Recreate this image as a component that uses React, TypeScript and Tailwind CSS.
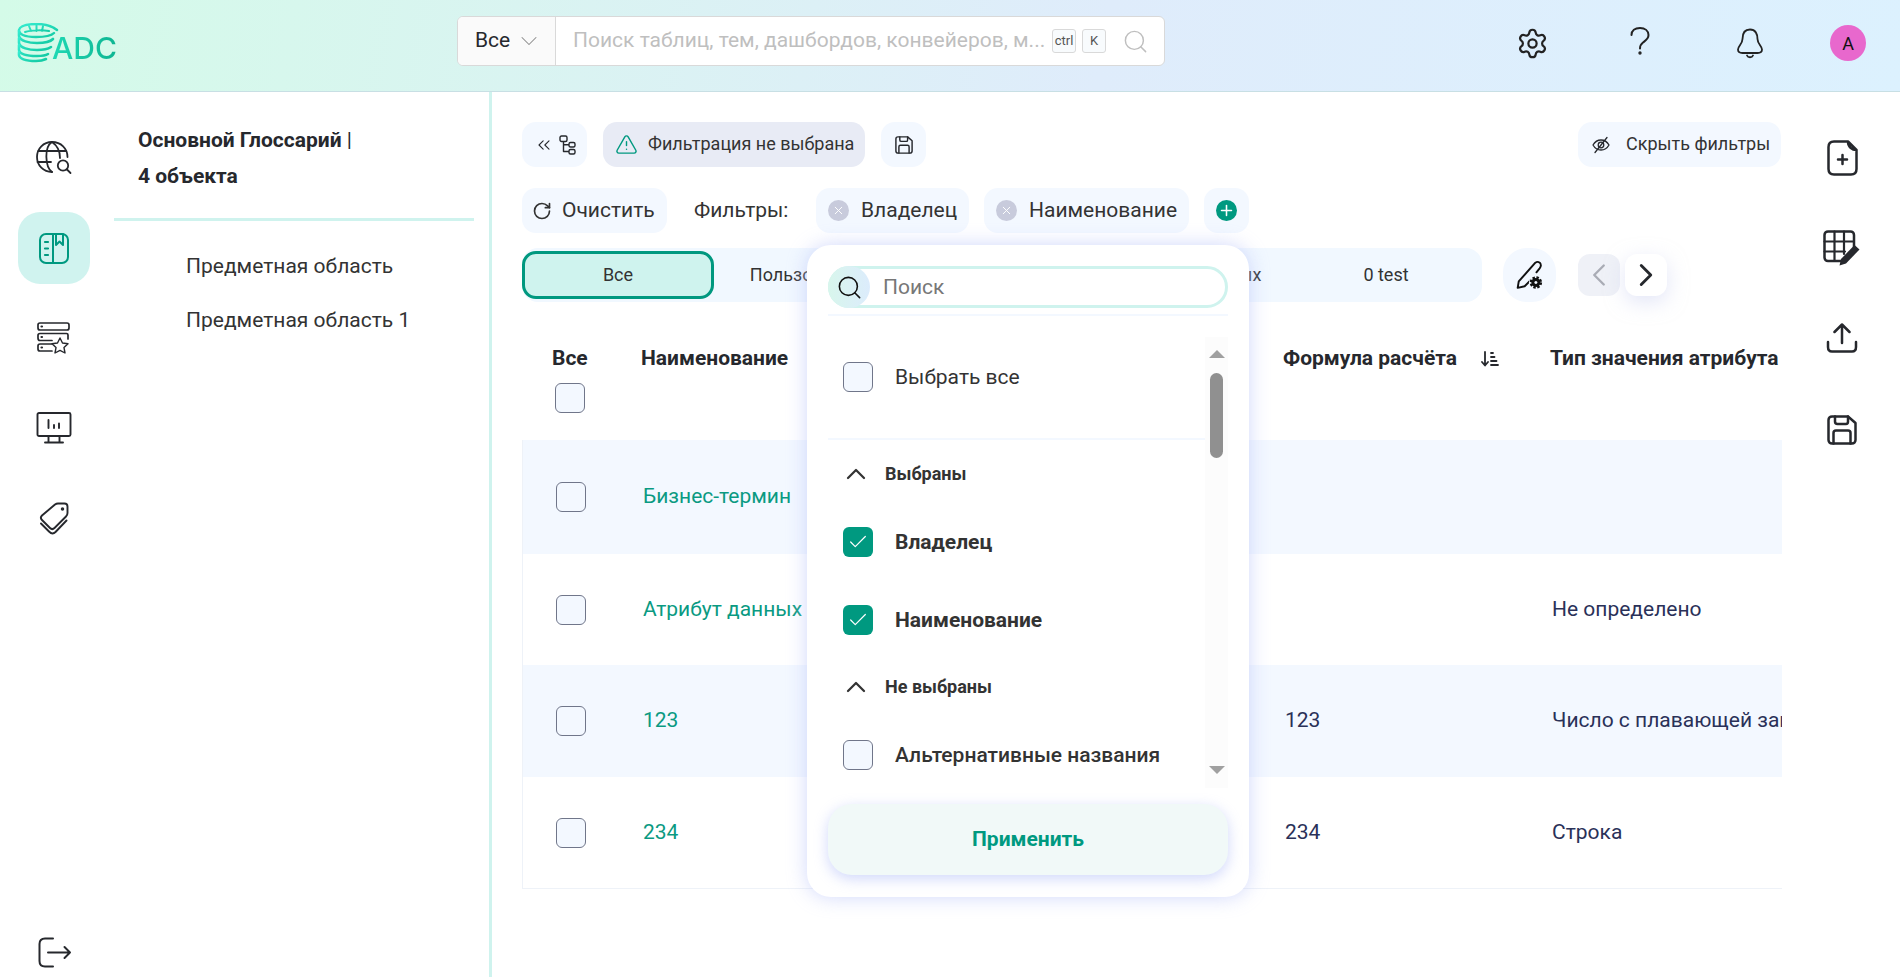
import React from 'react';
import { Settings, RotateCw, X, Plus, ChevronUp, ChevronLeft, ChevronRight, ChevronDown, Search, Check, ChevronsLeft, TriangleAlert } from 'lucide-react';

const Logo = () => (
  <div className="flex items-end">
    <svg width="44" height="40" viewBox="0 0 44 40" fill="none" className="shrink-0">
      <defs>
        <linearGradient id="lg" x1="0" y1="0" x2="1" y2="1">
          <stop offset="0" stopColor="#35ecd0" />
          <stop offset="1" stopColor="#12c9a2" />
        </linearGradient>
      </defs>
      <g stroke="url(#lg)" fill="none" strokeLinecap="round">
        <path d="M40 7C34 2 27 1 20 1C12 1 3 2 2 7C1.500 11 7 14 19 14C28 14 34 13 37 10" strokeWidth="2.400" />
        <path d="M12 3L14 8M26 3L25 8M19.500 2V8M8 9C14 7 26 7 32 8" strokeWidth="2" />
        <path d="M2 8V13C3 18 12 20 20 20C27 20 33 19 36 16" strokeWidth="2.600" />
        <path d="M2 15V20C3 25 12 27 20 27C26 27 31 26 34 24" strokeWidth="2.600" />
        <path d="M2 22V27C3 32 12 33 20 33C24 33 28 33 31 31" strokeWidth="2.600" />
        <path d="M2 29V32C3 37 12 38 19 38C23 38 27 37 29 36" strokeWidth="2.600" />
      </g>
    </svg>
    <span className="-ml-[9px] bg-linear-to-r from-[#1fd9b4] to-[#0db592] bg-clip-text text-[30px] leading-[30px] font-medium text-transparent [font-family:Inter,sans-serif]">ADC</span>
  </div>
);

const HelpIcon = () => (
  <svg width="20" height="28" viewBox="0 0 20 28" fill="none" stroke="#222" strokeWidth="2" strokeLinecap="round">
    <path d="M1.500 8C1.500 3.500 5 1 10 1C15 1 18.500 3.800 18.500 8C18.500 12 15.500 13.500 13 15.500C11 17 10 18.500 10 21.500" />
    <circle cx="10" cy="26" r="0.700" fill="#222" />
  </svg>
);

const BellIcon = () => (
  <svg width="28" height="31" viewBox="0 0 28 31" fill="none" stroke="#222" strokeWidth="1.800" strokeLinecap="round" strokeLinejoin="round">
    <path d="M14 1.500C8.500 1.500 6.500 6 6.500 11C6.500 16 2 18 2 21.500C2 24 4 25 6.500 25H21.500C24 25 26 24 26 21.500C26 18 21.500 16 21.500 11C21.500 6 19.500 1.500 14 1.500Z" />
    <path d="M11 27.500C12 29.800 16 29.800 17 27.500" />
  </svg>
);

const GlobeIcon = () => (
  <svg width="36" height="34" viewBox="0 0 36 34" fill="none" stroke="#26282d" strokeWidth="1.800" strokeLinecap="round">
    <path d="M31.500 16C31.500 7.500 25 1 16 1C7.500 1 1 7.500 1 16C1 24.500 7.500 31 16 31" />
    <path d="M16 31C9 26 8 6 16 1C22 5 24 11 24 17" />
    <path d="M2.500 10H30M1.500 21H15" />
    <circle cx="27" cy="24.500" r="5.200" />
    <path d="M31 28.500L34.500 32" />
  </svg>
);

const BookIcon = () => (
  <svg width="30" height="31" viewBox="0 0 30 31" fill="none" stroke="#009980" strokeWidth="2" strokeLinecap="round" strokeLinejoin="round">
    <rect x="1" y="1" width="28" height="29" rx="6" />
    <path d="M14 1V30M17 1V12L20.500 8.500L24 12V1" />
    <path d="M6 9H9M6 15.500H9M6 22H9" strokeWidth="2.200" />
  </svg>
);

const ServerStarIcon = () => (
  <svg width="34" height="32" viewBox="0 0 34 32" fill="none" stroke="#26282d" strokeWidth="1.700" strokeLinecap="round" strokeLinejoin="round">
    <rect x="1" y="1" width="31" height="7" rx="2" />
    <path d="M31 17V13C31 12 30.500 11.500 29.500 11.500H3C1.800 11.500 1 12.300 1 13.500V16C1 17.500 1.800 18.500 3 18.500H15" />
    <path d="M15 22H3C1.800 22 1 22.800 1 24V27C1 28.200 1.800 29 3 29H15" />
    <path d="M4.500 4.500H5M4.500 15H5M4.500 25.500H5" strokeWidth="2.200" />
    <path d="M23 16L25.500 21L31 21.800L27 25.600L28 31L23 28.400L18 31L19 25.600L15 21.800L20.500 21Z" strokeWidth="1.400" />
  </svg>
);

const MonitorIcon = () => (
  <svg width="36" height="32" viewBox="0 0 36 32" fill="none" stroke="#26282d" strokeWidth="1.900" strokeLinecap="round" strokeLinejoin="round">
    <rect x="1.500" y="1" width="33" height="23" rx="1.500" />
    <path d="M12.500 24V30M23.500 24V30M9 30.500H27" />
    <path d="M12.500 8V16M18 13V16M23 11.500V16" />
  </svg>
);

const TagIcon = () => (
  <svg width="30" height="33" viewBox="0 0 30 33" fill="none" stroke="#26282d" strokeWidth="1.900" strokeLinecap="round" strokeLinejoin="round">
    <path d="M19 1.500H25.500C27.500 1.500 28.500 2.500 28.500 4.500V11C28.500 12.500 28 13.500 27 14.500L15.500 26C14 27.500 12.500 27.500 11 26L3 18C1.500 16.500 1.500 15 3 13.500L16 2.500C17 1.800 18 1.500 19 1.500Z" />
    <circle cx="23.500" cy="7" r="0.800" fill="#26282d" />
    <path d="M2 21.500L10 29.500C12.500 32 14.500 32 16.500 30L27.500 18.500" />
  </svg>
);

const LogoutIcon = () => (
  <svg width="34" height="31" viewBox="0 0 34 31" fill="none" stroke="#26282d" strokeWidth="2" strokeLinecap="round" strokeLinejoin="round">
    <path d="M15 1.500H7C3.500 1.500 1.500 3.500 1.500 7V24C1.500 27.500 3.500 29.500 7 29.500H15" />
    <path d="M10 15.500H32M26.500 10L32 15.500L26.500 21" />
  </svg>
);

const TreeIcon = () => (
  <svg width="17" height="20" viewBox="0 0 17 20" fill="none" stroke="#26282d" strokeWidth="1.400" strokeLinejoin="round">
    <rect x="1" y="1" width="7" height="5.500" rx="1.500" />
    <rect x="10" y="7.500" width="6" height="4.500" rx="1.500" />
    <rect x="10" y="14.500" width="6" height="4.500" rx="1.500" />
    <path d="M4.500 6.500V16.500H10M4.500 9.800H10" />
  </svg>
);

const SaveIcon = ({ size, width }: { size: number; width: number }) => (
  <svg width={size} height={size} viewBox="0 0 30 30" fill="none" stroke="#26282d" strokeWidth={width} strokeLinecap="round" strokeLinejoin="round">
    <path d="M5 1.500H21L28.500 8V25C28.500 27 27 28.500 25 28.500H5C3 28.500 1.500 27 1.500 25V5C1.500 3 3 1.500 5 1.500Z" />
    <path d="M8 1.500V6.500C8 8 9 9 10.500 9H19C20.500 9 21 8 21 6.500V1.500" />
    <path d="M6.500 28.500V18C6.500 16.500 7.500 15.500 9 15.500H21C22.500 15.500 23.500 16.500 23.500 18V28.500" />
  </svg>
);

const EyeSlashIcon = () => (
  <svg width="18" height="18" viewBox="0 0 18 18" fill="none" stroke="#26282d" strokeWidth="1.300" strokeLinecap="round" strokeLinejoin="round">
    <path d="M1 9C3 5.500 5.800 4 9 4C12.200 4 15 5.500 17 9C15 12.500 12.200 14 9 14C5.800 14 3 12.500 1 9Z" />
    <circle cx="9" cy="9" r="2.800" />
    <path d="M15 1.500L3 16.500" />
  </svg>
);

const PenGearIcon = () => (
  <svg width="28" height="30" viewBox="0 0 26 28" fill="none">
    <path d="M18 2.500L2.500 20L1.500 26L8 24.500L14.500 18M18 2.500C20 1 22.500 2 23 4C23.500 5.500 23 6.500 22 7.800L19 11.500" stroke="#111" strokeWidth="1.800" strokeLinecap="round" strokeLinejoin="round" />
    <circle cx="18.500" cy="21" r="6.500" fill="#f3f8ff" />
    <circle cx="18.500" cy="21" r="4.600" stroke="#111" strokeWidth="2.400" strokeDasharray="2.200 1.400" />
    <circle cx="18.500" cy="21" r="4.200" fill="#111" />
    <circle cx="18.500" cy="21" r="1.400" fill="#f3f8ff" />
  </svg>
);

const NewDocIcon = () => (
  <svg width="31" height="36" viewBox="0 0 31 36" fill="none" stroke="#26282d" strokeWidth="2.500" strokeLinecap="round" strokeLinejoin="round">
    <path d="M21 1.500H7C3.500 1.500 1.500 3.500 1.500 7V29C1.500 32.500 3.500 34.500 7 34.500H24C27.500 34.500 29.500 32.500 29.500 29V10C25 10 21 7 21 1.500ZM21 1.500L29.500 10" />
    <path d="M15.500 15V24M11 19.500H20" />
  </svg>
);

const TableEditIcon = () => (
  <svg width="38" height="36" viewBox="0 0 38 36" fill="none" strokeLinecap="round" strokeLinejoin="round">
    <path d="M20 31H5C3 31 1.500 29.500 1.500 27.500V5C1.500 3 3 1.500 5 1.500H27.500C29.500 1.500 31 3 31 5V17" stroke="#26282d" strokeWidth="2.500" />
    <path d="M1.500 11.500H31M1.500 21.500H22M11.500 1.500V31M21 1.500V24" stroke="#26282d" strokeWidth="2.200" />
    <path d="M31.500 15L36.500 19.500L23 33.500L16.500 35.500L18 29Z" fill="#26282d" />
  </svg>
);

const UploadIcon = () => (
  <svg width="32" height="30" viewBox="0 0 32 30" fill="none" stroke="#26282d" strokeWidth="2.500" strokeLinecap="round" strokeLinejoin="round">
    <path d="M16 20V2M8.500 9L16 1.500L23.500 9" />
    <path d="M2 19V24C2 27 3.500 28.500 6 28.500H26C28.500 28.500 30 27 30 24V19" />
  </svg>
);

const SortIcon = () => (
  <svg width="18" height="16" viewBox="0 0 18 16" fill="none" stroke="#26282d" strokeWidth="1.800" strokeLinecap="round" strokeLinejoin="round">
    <path d="M4 1V14M1 11L4 14.500L7 11" />
    <path d="M10 2H12M10 6H13.500M10 10H15.500M10 14H17" />
  </svg>
);

const Box = ({ checked }: { checked?: boolean }) =>
  checked ? (
    <span className="flex h-[30px] w-[30px] shrink-0 items-center justify-center rounded-[6px] bg-[#009980]">
      <Check size={22} strokeWidth={1.300} className="text-white" />
    </span>
  ) : (
    <span className="block h-[30px] w-[30px] shrink-0 rounded-[6px] border border-[#70768a] bg-[#f3f8ff]" />
  );

const FilterChip = ({ label, className }: { label: string; className: string }) => (
  <div className={`flex h-[45px] items-center rounded-[14px] bg-[#f3f8ff] pl-[12px] ${className}`}>
    <span className="flex h-[21px] w-[21px] items-center justify-center rounded-full bg-[#c8cbdc]">
      <X size={13} strokeWidth={1.800} className="text-white" />
    </span>
    <span className="ml-[12px] text-[21px] text-[#333]">{label}</span>
  </div>
);

const rows = [
  { name: 'Бизнес-термин', formula: '', type: '', blue: true, h: 'h-[114px]' },
  { name: 'Атрибут данных', formula: '', type: 'Не определено', blue: false, h: 'h-[111px]' },
  { name: '123', formula: '123', type: 'Число с плавающей запятой', blue: true, h: 'h-[112px]' },
  { name: '234', formula: '234', type: 'Строка', blue: false, h: 'h-[111px]' },
];

const tabs = ['Все', 'Пользователя', 'Системные', 'Корпоративных', '0 test'];

const App: React.FC = () => {
  return (
    <div className="relative flex h-[977px] w-full flex-col overflow-hidden bg-white text-[#26282d] [font-family:Roboto,sans-serif]">
      {/* Header */}
      <header className="flex h-[92px] shrink-0 items-start border-b border-[#c8dfe4] bg-linear-[100deg,#d4fbe8_0%,#dfecfb_58%,#dcf1fe_100%]">
        <div className="mt-[23px] ml-[17px] w-[440px]">
          <Logo />
        </div>
        <div className="mt-[16px] flex h-[50px] w-[708px] overflow-hidden rounded-[6px] border border-[#d9d9d9] bg-white">
          <div className="flex w-[98px] shrink-0 items-center border-r border-[#d9d9d9] bg-[#fafafa] pl-[17px] text-[21px] text-[#26282d]">
            Все
            <ChevronDown size={28} strokeWidth={0.900} className="ml-[5px] text-[#8c8c8c]" />
          </div>
          <div className="flex min-w-0 flex-1 items-center pl-[17px]">
            <span className="w-[470px] whitespace-nowrap text-[21px] text-[#bfbfbf]">Поиск таблиц, тем, дашбордов, конвейеров, м...</span>
            <span className="ml-[9px] flex h-[24px] w-[24px] items-center justify-center rounded-[3px] border border-[#d9d9d9] bg-[#f8fbfd] text-[13px] text-[#555]">ctrl</span>
            <span className="ml-[6px] flex h-[24px] w-[24px] items-center justify-center rounded-[3px] border border-[#d9d9d9] bg-[#f8fbfd] text-[13px] text-[#555]">K</span>
            <Search size={27} strokeWidth={1.300} className="ml-[16px] text-[#bfbfbf]" />
          </div>
        </div>
        <div className="mt-[25px] ml-[351px] flex items-center">
          <Settings size={33} strokeWidth={1.600} className="text-[#222]" />
          <span className="ml-[81px] -translate-y-[2px]"><HelpIcon /></span>
          <span className="ml-[86px]"><BellIcon /></span>
          <span className="ml-[66px] flex h-[36px] w-[36px] items-center justify-center rounded-full bg-[#e868cd] text-[18px] text-[#111]">A</span>
        </div>
      </header>

      <div className="flex min-h-0 flex-1">
        {/* Left rail */}
        <nav className="flex w-[108px] shrink-0 flex-col pt-[21px] pb-0">
          <div className="flex h-[90px] w-[108px] items-center justify-center pr-[1px]"><GlobeIcon /></div>
          <div className="flex h-[90px] w-[108px] items-center"><div className="ml-[18px] flex h-[72px] w-[72px] items-center justify-center rounded-[22px] bg-[#d0f3ef]"><BookIcon /></div></div>
          <div className="flex h-[90px] w-[108px] items-center justify-center"><ServerStarIcon /></div>
          <div className="flex h-[90px] w-[108px] items-center justify-center"><MonitorIcon /></div>
          <div className="flex h-[90px] w-[108px] items-center justify-center"><TagIcon /></div>
          <div className="mt-auto flex h-[50px] w-[108px] items-center justify-center pl-[2px]"><LogoutIcon /></div>
        </nav>

        {/* Glossary tree */}
        <aside className="w-[384px] shrink-0 border-r-[3px] border-[#cff3ee] pt-[30px]">
          <div className="pl-[30px] text-[21px] leading-[36px] font-bold text-[#26282d]">
            <div>Основной Глоссарий <span className="font-normal">|</span></div>
            <div>4 объекта</div>
          </div>
          <div className="mt-[24px] ml-[6px] h-[3px] w-[360px] bg-[#cff3ee]" />
          <ul className="mt-[18px] pl-[78px] text-[21px] leading-[54px] text-[#333]">
            <li>Предметная область</li>
            <li>Предметная область 1</li>
          </ul>
        </aside>

        {/* Content */}
        <main className="min-w-0 flex-1 pt-[30px] pl-[30px]">
          <div className="flex h-[45px] items-stretch">
            <button className="flex w-[65px] items-center justify-center gap-[5px] rounded-[14px] bg-[#f3f8ff]">
              <ChevronsLeft size={20} strokeWidth={1.300} />
              <TreeIcon />
            </button>
            <div className="ml-[16px] flex w-[262px] items-center rounded-[14px] bg-[#e8ebf5] pl-[12px] text-[18px] text-[#333]">
              <TriangleAlert size={23} strokeWidth={1.500} className="text-[#009980]" />
              <span className="ml-[10px] -translate-y-[1px] whitespace-nowrap">Фильтрация не выбрана</span>
            </div>
            <button className="ml-[16px] flex w-[45px] items-center justify-center rounded-[14px] bg-[#f3f8ff]"><SaveIcon size={18} width={2.400} /></button>
            <button className="mr-[1px] ml-auto flex w-[203px] items-center rounded-[14px] bg-[#f3f8ff] pl-[14px] text-[18px] text-[#333]">
              <EyeSlashIcon />
              <span className="ml-[16px] -translate-y-[1px] whitespace-nowrap">Скрыть фильтры</span>
            </button>
          </div>

          <div className="mt-[21px] flex h-[45px] items-center">
            <button className="flex h-[45px] w-[145px] items-center rounded-[14px] bg-[#f3f8ff] pl-[10px] text-[21px] text-[#333]">
              <RotateCw size={20} strokeWidth={2} />
              <span className="ml-[10px]">Очистить</span>
            </button>
            <span className="ml-[27px] w-[95px] text-[21px] text-[#333]">Фильтры:</span>
            <FilterChip label="Владелец" className="ml-[27px] w-[153px]" />
            <FilterChip label="Наименование" className="ml-[15px] w-[205px]" />
            <button className="ml-[15px] flex h-[45px] w-[45px] items-center justify-center rounded-[14px] bg-[#f3f8ff]">
              <span className="flex h-[21px] w-[21px] items-center justify-center rounded-full bg-[#009980]"><Plus size={17} strokeWidth={2.200} className="text-white" /></span>
            </button>
          </div>

          <div className="mt-[15px] flex h-[54px] items-center">
            <div className="grid h-[54px] w-[960px] grid-cols-5 items-center rounded-[16px] bg-[#f1f8ff] text-[18px] text-[#333]">
              {tabs.map((tab, i) =>
                i === 0 ? (
                  <div key={tab} className="flex h-[48px] items-center justify-center rounded-[14px] border-[3px] border-[#00987f] bg-[#cff3ee] pb-[2px]">{tab}</div>
                ) : (
                  <div key={tab} className="-translate-y-[1px] text-center whitespace-nowrap">{tab}</div>
                )
              )}
            </div>
            <button className="ml-[21px] flex h-[54px] w-[53px] items-center justify-center rounded-[24px] bg-[#f3f8ff]"><PenGearIcon /></button>
            <button className="ml-[22px] flex h-[42px] w-[42px] items-center justify-center rounded-[12px] bg-[#eff1f7]"><ChevronLeft size={38} strokeWidth={1.500} className="text-[#a9acb5]" /></button>
            <button className="ml-[5px] flex h-[42px] w-[42px] items-center justify-center rounded-[12px] bg-white shadow-[0_6px_20px_rgba(200,205,240,0.5)]"><ChevronRight size={38} strokeWidth={1.800} className="text-[#26282d]" /></button>
          </div>

          {/* Table */}
          <div className="overflow-hidden">
            <div className="flex h-[138px] text-[21px] font-bold text-[#26282d]">
              <div className="w-[119px] shrink-0 pt-[44px] pl-[30px] leading-[24px]">
                Все
                <div className="mt-[13px] ml-[3px]"><Box /></div>
              </div>
              <div className="w-[642px] shrink-0 pt-[44px] leading-[24px]">Наименование</div>
              <div className="flex w-[267px] shrink-0 items-start pt-[44px] leading-[24px]">
                Формула расчёта
                <span className="mt-[5px] ml-[24px]"><SortIcon /></span>
              </div>
              <div className="min-w-0 flex-1 pt-[44px] leading-[24px] whitespace-nowrap">Тип значения атрибута</div>
            </div>
            <div className="border-b border-l border-[#eef2f8]">
              {rows.map((row) => (
                <div key={row.name} className={`flex items-center text-[21px] ${row.h} ${row.blue ? 'bg-[#f3f8ff]' : 'bg-white'}`}>
                  <div className="w-[118px] shrink-0 pl-[33px]"><Box /></div>
                  <div className="w-[642px] shrink-0 pl-[2px] whitespace-nowrap text-[#0a9a82]">{row.name}</div>
                  <div className="w-[267px] shrink-0 pl-[2px] text-[#2a3158]">{row.formula}</div>
                  <div className="min-w-0 flex-1 overflow-hidden pl-[2px] whitespace-nowrap text-[#2a3158]">{row.type}</div>
                </div>
              ))}
            </div>
          </div>
        </main>

        {/* Right rail */}
        <aside className="flex w-[118px] shrink-0 flex-col items-center pt-[21px] pl-[2px]">
          <div className="flex h-[90px] items-center"><NewDocIcon /></div>
          <div className="flex h-[90px] items-center"><TableEditIcon /></div>
          <div className="flex h-[90px] items-center"><UploadIcon /></div>
          <div className="flex h-[90px] items-center pt-[4px]"><SaveIcon size={30} width={2.500} /></div>
        </aside>
      </div>

      {/* Filter dropdown */}
      <div className="absolute top-[245px] left-[807px] h-[652px] w-[442px] rounded-[24px] bg-white px-[21px] pt-[21px] shadow-[0_0_20px_rgba(190,200,250,0.7)]">
        <div className="flex h-[42px] items-center rounded-full border-[3px] border-[#cff3ee]">
          <span className="-my-[3px] -ml-[3px] flex h-[42px] w-[42px] items-center justify-center rounded-full bg-linear-to-r from-[#d8f6ec] to-[#dcecfc]">
            <Search size={27} strokeWidth={1.400} className="text-[#111]" />
          </span>
          <span className="ml-[13px] translate-y-[1px] text-[21px] text-[#777]">Поиск</span>
        </div>
        <div className="mt-[6px] h-[2px] bg-[#f3f8ff]" />
        <div className="mt-[21px] flex h-[451px] overflow-hidden">
          <div className="min-w-0 flex-1 text-[21px] leading-[30px] text-[#333]">
            <div className="flex items-center pt-[25px] pl-[15px]">
              <Box />
              <span className="ml-[22px]">Выбрать все</span>
            </div>
            <div className="mt-[46px] h-[2px] bg-[#f3f8ff]" />
            <div className="mt-[22px] flex h-[24px] items-center pl-[12px] text-[18px] font-bold">
              <ChevronUp size={32} strokeWidth={1.700} className="shrink-0" />
              <span className="ml-[13px]">Выбраны</span>
            </div>
            <div className="mt-[41px] flex items-center pl-[15px] font-bold">
              <Box checked />
              <span className="ml-[22px]">Владелец</span>
            </div>
            <div className="mt-[48px] flex items-center pl-[15px] font-bold">
              <Box checked />
              <span className="ml-[22px]">Наименование</span>
            </div>
            <div className="mt-[40px] flex h-[24px] items-center pl-[12px] text-[18px] font-bold">
              <ChevronUp size={32} strokeWidth={1.700} className="shrink-0" />
              <span className="ml-[13px]">Не выбраны</span>
            </div>
            <div className="mt-[41px] flex items-center pl-[15px] font-medium">
              <Box />
              <span className="ml-[22px]">Альтернативные названия</span>
            </div>
          </div>
          <div className="flex w-[23px] shrink-0 flex-col items-center bg-[#fcfcfc] pt-[13px]">
            <span className="h-0 w-0 border-x-[8px] border-b-[8px] border-x-transparent border-b-[#a0a0a0]" />
            <span className="mt-[15px] h-[85px] w-[13px] rounded-full bg-[#909090]" />
            <span className="mt-[308px] h-0 w-0 border-x-[8px] border-t-[8px] border-x-transparent border-t-[#a0a0a0]" />
          </div>
        </div>
        <button className="mt-[16px] h-[71px] w-full rounded-[24px] bg-[#f1f9f8] text-[21px] font-bold text-[#009980] shadow-[0_4px_14px_rgba(190,200,250,0.7)]">Применить</button>
      </div>
    </div>
  );
};

export default App;
